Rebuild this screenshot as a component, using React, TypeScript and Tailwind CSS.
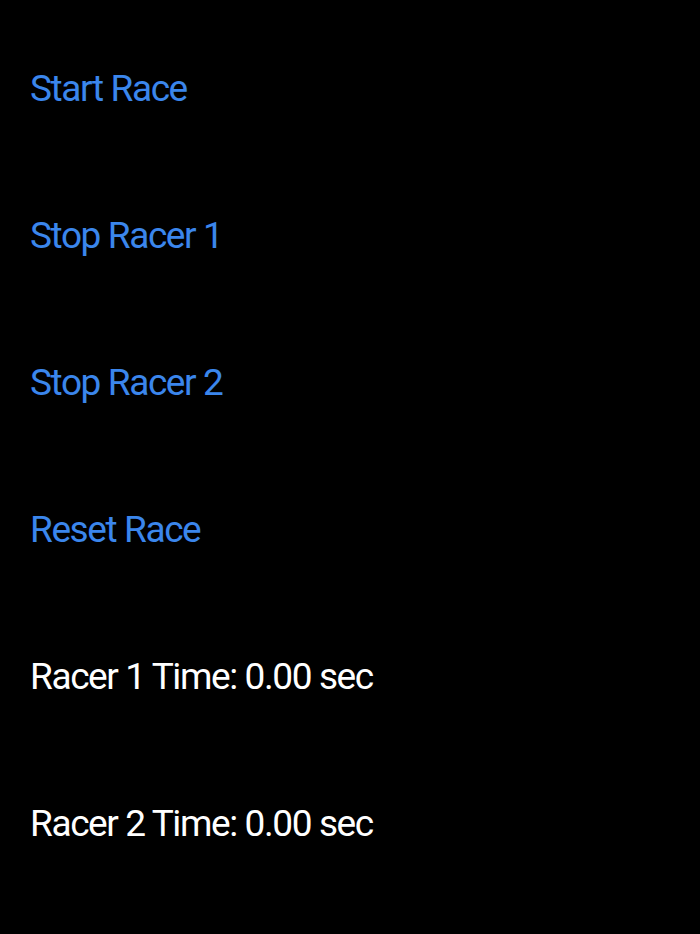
import React from 'react';

const actions = ['Start Race', 'Stop Racer 1', 'Stop Racer 2', 'Reset Race'];
const times = [
  { label: 'Racer 1 Time', value: 0 },
  { label: 'Racer 2 Time', value: 0 },
];

export default function App() {
  return (
    <div className="min-h-[934px] w-full bg-black pt-[15px] pl-[30px] font-['Roboto',sans-serif]">
      {actions.map((action) => (
        <div key={action} className="flex h-[147px] items-center">
          <button className="text-[37px] leading-none tracking-[-1.4px] text-[#3b86ec]">{action}</button>
        </div>
      ))}
      {times.map((t) => (
        <div key={t.label} className="flex h-[147px] items-center">
          <span className="text-[37px] leading-none tracking-[-1.4px] text-white">
            {t.label}: {t.value.toFixed(2)} sec
          </span>
        </div>
      ))}
    </div>
  );
}
